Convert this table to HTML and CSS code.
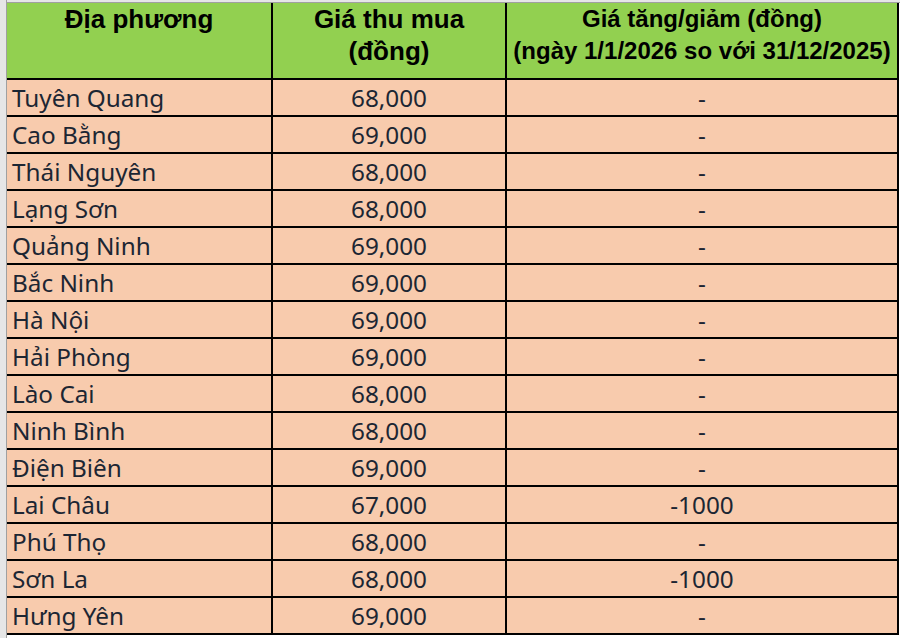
FILE: index.html
```html
<!DOCTYPE html>
<html lang="vi">
<head>
<meta charset="utf-8">
<link rel="stylesheet" href="styles.css">
</head>
<body>
<div class="sheet">
  <div class="gutter"></div>
  <div class="main">
    <div class="topstrip"></div>
    <table class="grid">
      <colgroup>
        <col class="c1"><col class="c2"><col class="c3">
      </colgroup>
      <thead>
        <tr>
          <th class="big">Địa phương</th>
          <th class="big">Giá thu mua<br>(đồng)</th>
          <th>Giá tăng/giảm (đồng)<br>(ngày 1/1/2026 so với 31/12/2025)</th>
        </tr>
      </thead>
      <tbody>
        <tr><td class="name">Tuyên Quang</td><td>68,000</td><td>-</td></tr>
        <tr><td class="name">Cao Bằng</td><td>69,000</td><td>-</td></tr>
        <tr><td class="name">Thái Nguyên</td><td>68,000</td><td>-</td></tr>
        <tr><td class="name">Lạng Sơn</td><td>68,000</td><td>-</td></tr>
        <tr><td class="name">Quảng Ninh</td><td>69,000</td><td>-</td></tr>
        <tr><td class="name">Bắc Ninh</td><td>69,000</td><td>-</td></tr>
        <tr><td class="name">Hà Nội</td><td>69,000</td><td>-</td></tr>
        <tr><td class="name">Hải Phòng</td><td>69,000</td><td>-</td></tr>
        <tr><td class="name">Lào Cai</td><td>68,000</td><td>-</td></tr>
        <tr><td class="name">Ninh Bình</td><td>68,000</td><td>-</td></tr>
        <tr><td class="name">Điện Biên</td><td>69,000</td><td>-</td></tr>
        <tr><td class="name">Lai Châu</td><td>67,000</td><td>-1000</td></tr>
        <tr><td class="name">Phú Thọ</td><td>68,000</td><td>-</td></tr>
        <tr><td class="name">Sơn La</td><td>68,000</td><td>-1000</td></tr>
        <tr><td class="name">Hưng Yên</td><td>69,000</td><td>-</td></tr>
      </tbody>
    </table>
  </div>
</div>
</body>
</html>
```

FILE: styles.css
```css
html, body {
  margin: 0;
  padding: 0;
  background: #ffffff;
}

.sheet {
  display: flex;
  width: 900px;
  height: 638px;
  overflow: hidden;
}

.gutter {
  width: 6px;
  flex: 0 0 6px;
  background: #e6e6e6;
  border-right: 1px solid #a0a0a0;
}

.main {
  flex: 1;
  display: flex;
  flex-direction: column;
}

.topstrip {
  height: 2px;
  background: #e6e6e6;
  border-bottom: 1px solid #a0a0a0;
}

.grid {
  border-collapse: collapse;
  table-layout: fixed;
  width: 891px;
}

.c1 { width: 265px; }
.c2 { width: 234px; }
.c3 { width: 392px; }

.grid th {
  background: #92d050;
  color: #000000;
  font-family: "Liberation Sans", Arial, sans-serif;
  font-weight: bold;
  font-size: 24px;
  line-height: 32px;
  height: 75px;
  padding: 0;
  vertical-align: top;
  text-align: center;
  border-bottom: 2px solid #000;
  border-right: 2px solid #000;
}

.grid th.big {
  font-size: 26px;
}

.grid td {
  background: #f8cbad;
  color: #1c2633;
  font-family: "Noto Sans", "Open Sans", sans-serif;
  font-size: 24.3px;
  line-height: 30px;
  height: 35px;
  padding: 0;
  text-align: center;
  vertical-align: middle;
  border-bottom: 2px solid #000;
  border-right: 2px solid #000;
  white-space: nowrap;
}

.grid td.name {
  text-align: left;
  padding-left: 5px;
}
```
